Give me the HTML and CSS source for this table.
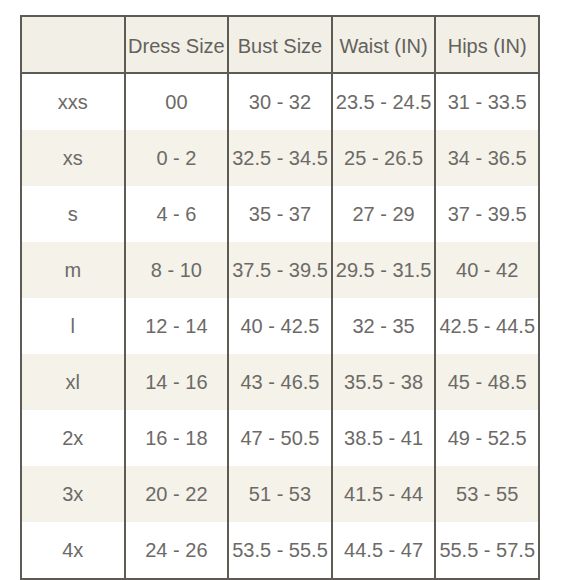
FILE: index.html
```html
<!DOCTYPE html>
<html>
<head>
<meta charset="utf-8">
<link rel="stylesheet" href="styles.css">
</head>
<body>
<table class="chart">
  <thead>
    <tr><th></th><th>Dress Size</th><th>Bust Size</th><th>Waist (IN)</th><th>Hips (IN)</th></tr>
  </thead>
  <tbody>
    <tr><td>xxs</td><td>00</td><td>30 - 32</td><td>23.5 - 24.5</td><td>31 - 33.5</td></tr>
    <tr class="alt"><td>xs</td><td>0 - 2</td><td>32.5 - 34.5</td><td>25 - 26.5</td><td>34 - 36.5</td></tr>
    <tr><td>s</td><td>4 - 6</td><td>35 - 37</td><td>27 - 29</td><td>37 - 39.5</td></tr>
    <tr class="alt"><td>m</td><td>8 - 10</td><td>37.5 - 39.5</td><td>29.5 - 31.5</td><td>40 - 42</td></tr>
    <tr><td>l</td><td>12 - 14</td><td>40 - 42.5</td><td>32 - 35</td><td>42.5 - 44.5</td></tr>
    <tr class="alt"><td>xl</td><td>14 - 16</td><td>43 - 46.5</td><td>35.5 - 38</td><td>45 - 48.5</td></tr>
    <tr><td>2x</td><td>16 - 18</td><td>47 - 50.5</td><td>38.5 - 41</td><td>49 - 52.5</td></tr>
    <tr class="alt"><td>3x</td><td>20 - 22</td><td>51 - 53</td><td>41.5 - 44</td><td>53 - 55</td></tr>
    <tr><td>4x</td><td>24 - 26</td><td>53.5 - 55.5</td><td>44.5 - 47</td><td>55.5 - 57.5</td></tr>
  </tbody>
</table>
</body>
</html>
```
FILE: styles.css
```css
html, body {
  margin: 0;
  background: #ffffff;
}
body {
  padding: 15px 0 0 20px;
}
.chart {
  border-collapse: collapse;
  table-layout: fixed;
  width: 520px;
  border: 2px solid #5e5a54;
  font-family: "Liberation Sans", Arial, sans-serif;
  font-size: 20px;
  color: #6c6a67;
}
.chart th,
.chart td {
  border-left: 2px solid #5e5a54;
  border-right: 2px solid #5e5a54;
  text-align: center;
  padding: 0;
  white-space: nowrap;
  overflow: visible;
}
.chart th {
  height: 52px;
  padding-top: 3px;
  font-weight: normal;
  background: #f2f0e6;
  border-bottom: 2px solid #5e5a54;
  color: #64615d;
}
.chart td {
  height: 56px;
}
.chart tr.alt td {
  background: #f4f2e9;
}
```
